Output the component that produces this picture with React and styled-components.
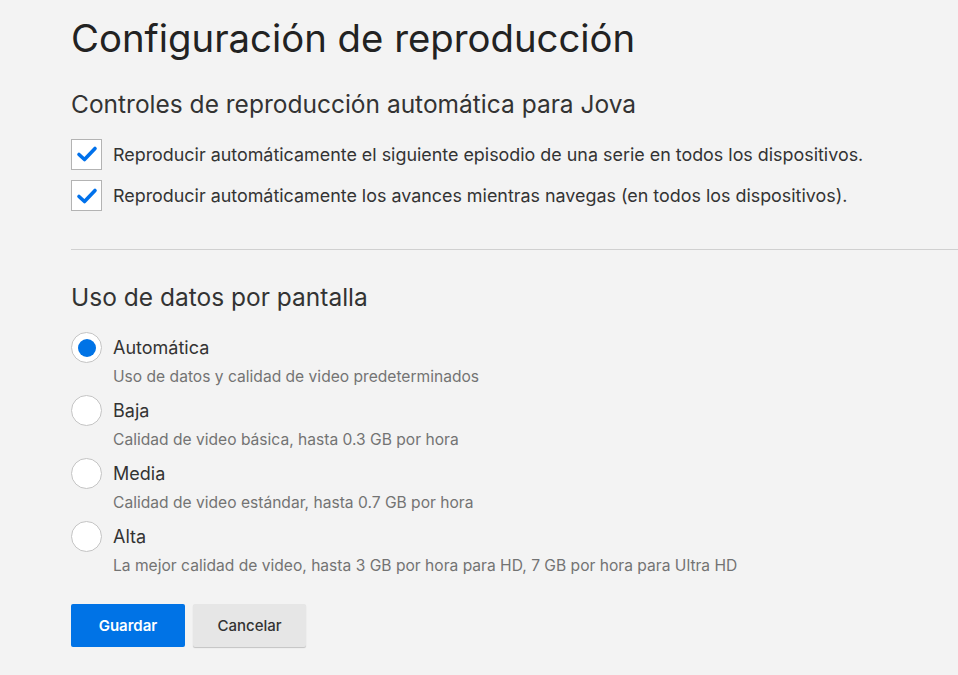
import React from 'react'
import styled, { createGlobalStyle } from 'styled-components'

const GlobalStyle = createGlobalStyle`
  html, body {
    margin: 0;
    padding: 0;
    background: #f3f3f3;
  }
  body {
    font-family: Inter, "Noto Sans", Arial, sans-serif;
    color: #333;
    overflow: hidden;
  }
`

const Page = styled.div`
  width: 958px;
  height: 675px;
  padding: 12px 0 0 71px;
  box-sizing: border-box;
`

const Title = styled.h1`
  margin: 0;
  font-size: 38.3px;
  font-weight: 400;
  line-height: 52px;
  color: #222;
`

const SectionTitle = styled.h2`
  margin: ${p => p.top || 0}px 0 0;
  font-size: 24.5px;
  font-weight: 400;
  line-height: 30px;
  color: #333;
`

const CheckList = styled.div`
  display: flex;
  flex-direction: column;
  gap: 10.5px;
  margin-top: 20px;
`

const CheckRow = styled.label`
  display: flex;
  align-items: center;
  gap: 11px;
  font-size: 17.9px;
  color: #333;
`

const CheckBox = styled.span`
  width: 31px;
  height: 31px;
  flex: none;
  box-sizing: border-box;
  border: 1px solid #b3b3b3;
  background: #fff;
  display: flex;
  align-items: center;
  justify-content: center;
`

const Divider = styled.hr`
  margin: 37.5px 0 0;
  border: 0;
  border-top: 1px solid #d0d0d0;
`

const Options = styled.div`
  display: flex;
  flex-direction: column;
  gap: 8.5px;
  margin-top: 20.5px;
`

const Option = styled.div`
  display: grid;
  grid-template-columns: 31px 1fr;
  column-gap: 11px;
  align-items: center;
`

const Radio = styled.span`
  width: 31px;
  height: 31px;
  box-sizing: border-box;
  border-radius: 50%;
  border: 1px solid #c4c4c4;
  background: #fff;
  display: flex;
  align-items: center;
  justify-content: center;
  &::after {
    content: '';
    width: 18px;
    height: 18px;
    border-radius: 50%;
    background: ${p => (p.checked ? '#0073e6' : 'transparent')};
  }
`

const OptionLabel = styled.span`
  font-size: 18px;
  color: #333;
`

const OptionHint = styled.span`
  grid-column: 2;
  font-size: 15.6px;
  color: #737373;
  line-height: 20px;
  margin-top: 3.5px;
`

const Actions = styled.div`
  display: flex;
  gap: 8px;
  margin-top: 28px;
`

const Button = styled.button`
  width: ${p => p.w}px;
  height: 43px;
  border: 0;
  border-radius: 2px;
  font-family: inherit;
  font-size: 15px;
  font-weight: ${p => (p.primary ? 600 : 500)};
  color: ${p => (p.primary ? '#fff' : '#333')};
  background: ${p => (p.primary ? '#0073e6' : '#e6e6e6')};
  box-shadow: ${p => (p.primary ? 'none' : '0 1px 1px rgba(0,0,0,0.2)')};
`

const Check = () => (
  <svg width="22" height="18" viewBox="0 0 22 18">
    <path d="M3 9.5 L8.5 14.5 L19 3.5" fill="none" stroke="#0071eb" strokeWidth="3.6" strokeLinecap="round" strokeLinejoin="round" />
  </svg>
)

const options = [
  { label: 'Automática', hint: 'Uso de datos y calidad de video predeterminados', checked: true },
  { label: 'Baja', hint: 'Calidad de video básica, hasta 0.3 GB por hora' },
  { label: 'Media', hint: 'Calidad de video estándar, hasta 0.7 GB por hora' },
  { label: 'Alta', hint: 'La mejor calidad de video, hasta 3 GB por hora para HD, 7 GB por hora para Ultra HD' },
]

export default function App() {
  return (
    <Page>
      <GlobalStyle />
      <Title>Configuración de reproducción</Title>
      <SectionTitle top={24.5}>Controles de reproducción automática para Jova</SectionTitle>
      <CheckList>
        <CheckRow>
          <CheckBox><Check /></CheckBox>
          Reproducir automáticamente el siguiente episodio de una serie en todos los dispositivos.
        </CheckRow>
        <CheckRow>
          <CheckBox><Check /></CheckBox>
          Reproducir automáticamente los avances mientras navegas (en todos los dispositivos).
        </CheckRow>
      </CheckList>
      <Divider />
      <SectionTitle top={32}>Uso de datos por pantalla</SectionTitle>
      <Options>
        {options.map(o => (
          <Option key={o.label}>
            <Radio checked={o.checked} />
            <OptionLabel>{o.label}</OptionLabel>
            <OptionHint>{o.hint}</OptionHint>
          </Option>
        ))}
      </Options>
      <Actions>
        <Button primary w={114}>Guardar</Button>
        <Button w={113}>Cancelar</Button>
      </Actions>
    </Page>
  )
}
